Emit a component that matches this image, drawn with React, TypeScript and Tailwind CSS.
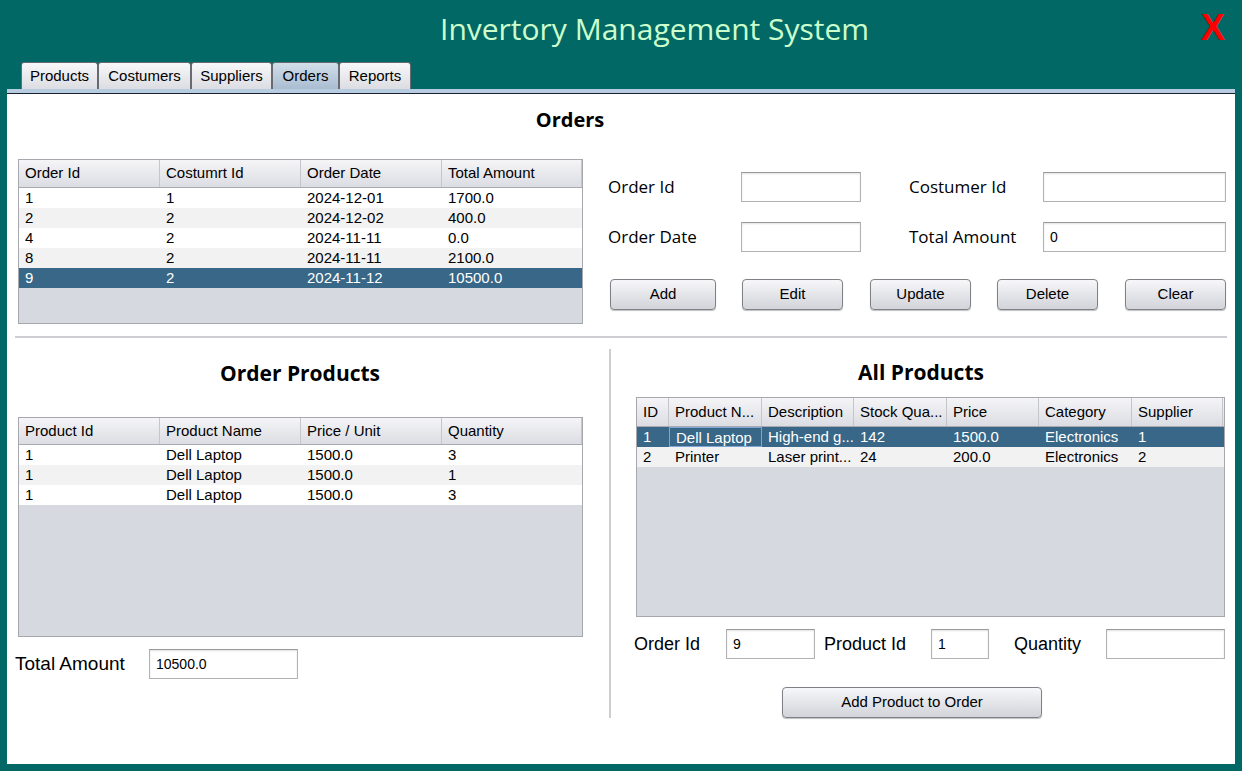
import React from "react";

type Col = { label: string; w: string };

const ordersCols: Col[] = [
  { label: "Order Id", w: "w-[141px]" },
  { label: "Costumrt Id", w: "w-[141px]" },
  { label: "Order Date", w: "w-[141px]" },
  { label: "Total Amount", w: "w-[140px]" },
];

const ordersRows = [
  ["1", "1", "2024-12-01", "1700.0"],
  ["2", "2", "2024-12-02", "400.0"],
  ["4", "2", "2024-11-11", "0.0"],
  ["8", "2", "2024-11-11", "2100.0"],
  ["9", "2", "2024-11-12", "10500.0"],
];

const orderProductCols: Col[] = [
  { label: "Product Id", w: "w-[141px]" },
  { label: "Product Name", w: "w-[141px]" },
  { label: "Price / Unit", w: "w-[141px]" },
  { label: "Quantity", w: "w-[140px]" },
];

const orderProductRows = [
  ["1", "Dell Laptop", "1500.0", "3"],
  ["1", "Dell Laptop", "1500.0", "1"],
  ["1", "Dell Laptop", "1500.0", "3"],
];

const allProductCols: Col[] = [
  { label: "ID", w: "w-[32px]" },
  { label: "Product N...", w: "w-[93px]" },
  { label: "Description", w: "w-[92px]" },
  { label: "Stock Qua...", w: "w-[93px]" },
  { label: "Price", w: "w-[92px]" },
  { label: "Category", w: "w-[93px]" },
  { label: "Supplier", w: "w-[91px]" },
];

const allProductRows = [
  ["1", "Dell Laptop", "High-end g...", "142", "1500.0", "Electronics", "1"],
  ["2", "Printer", "Laser print...", "24", "200.0", "Electronics", "2"],
];

const arial = "font-['Liberation_Sans',Arial,sans-serif]";
const segoe = "font-['Open_Sans','Noto_Sans',sans-serif]";

function Table({
  cols,
  rows,
  sel,
  focusCol,
  className,
  headH,
}: {
  cols: Col[];
  rows: string[][];
  sel?: number;
  focusCol?: number;
  className: string;
  headH: string;
}) {
  return (
    <div className={`border border-[#a6a8ae] bg-[#d6d9e0] overflow-hidden ${arial} text-[15px] text-black ${className}`}>
      <div className={`flex ${headH} bg-linear-to-b from-[#f5f5f7] to-[#dcdde3] border-b border-[#a9abb2]`}>
        {cols.map((c) => (
          <div
            key={c.label}
            className={`${c.w} shrink-0 flex items-center pl-[6px] border-r border-[#c4c6cc] whitespace-nowrap overflow-hidden`}
          >
            {c.label}
          </div>
        ))}
      </div>
      {rows.map((r, i) => {
        const selected = i === sel;
        const bg = selected ? "bg-[#386787] text-white" : i % 2 === 0 ? "bg-white" : "bg-[#f2f2f2]";
        return (
          <div key={i} className={`flex h-[20px] ${bg}`}>
            {r.map((v, j) => (
              <div
                key={j}
                className={`${cols[j].w} shrink-0 pl-[6px] leading-[20px] whitespace-nowrap overflow-hidden ${
                  selected && focusCol === j ? "border border-[#7fa6d2] pl-[5px] leading-[18px]" : ""
                }`}
              >
                {v}
              </div>
            ))}
          </div>
        );
      })}
    </div>
  );
}

function Field({ value, className }: { value?: string; className: string }) {
  return (
    <div
      className={`h-[30px] bg-white border border-[#b2b2b2] border-t-[#9a9a9a] shadow-[inset_0_1px_2px_rgba(0,0,0,0.12)] flex items-center px-[6px] ${arial} text-[14px] text-black ${className}`}
    >
      {value}
    </div>
  );
}

function Button({ label, className }: { label: string; className: string }) {
  return (
    <button
      className={`rounded-[4px] border border-[#7f8187] bg-linear-to-b from-[#f7f7f9] to-[#d2d4da] shadow-[0_1px_1px_rgba(0,0,0,0.25)] ${arial} text-[15px] text-black ${className}`}
    >
      {label}
    </button>
  );
}

const tabs = [
  { label: "Products", w: "w-[77px]" },
  { label: "Costumers", w: "w-[93px]" },
  { label: "Suppliers", w: "w-[81px]" },
  { label: "Orders", w: "w-[67px]" },
  { label: "Reports", w: "w-[72px]" },
];

export default function App() {
  return (
    <div className="w-[1242px] h-[771px] bg-[#016865] flex flex-col overflow-hidden">
      {/* Title bar */}
      <div className="h-[62px] flex items-center shrink-0">
        <h1 className={`ml-[440px] -mt-[6px] ${segoe} text-[30px] text-[#ccffcc]`}>Invertory Management System</h1>
        <span className={`ml-auto mr-[17px] -mt-[6px] ${arial} font-bold text-[36px] leading-none text-[#ff0000]`}>X</span>
      </div>

      {/* Tabs */}
      <div className="h-[27px] flex items-stretch pl-[21px] shrink-0">
        {tabs.map((t) => (
          <div
            key={t.label}
            className={`${t.w} flex items-center justify-center rounded-t-[3px] border border-b-0 border-[#676a70] ${arial} text-[15px] text-black ${
              t.label === "Orders"
                ? "bg-linear-to-b from-[#d3dee9] to-[#a9bdd1]"
                : "bg-linear-to-b from-[#f8f8fa] to-[#dcdde2]"
            }`}
          >
            {t.label}
          </div>
        ))}
      </div>

      <div className="mx-[7px] h-[4px] bg-[#b8cce1] shrink-0" />
      <div className="mx-[7px] h-[1px] bg-[#1b2030] shrink-0" />

      {/* Panel */}
      <div className="mx-[7px] h-[670px] bg-white flex flex-col shrink-0">
        {/* Orders section */}
        <div className="pt-[12px]">
          <h2 className={`w-[1126px] text-center ${segoe} font-bold text-[20px] leading-[28px] text-black`}>Orders</h2>
          <div className="flex mt-[25px]">
            <Table
              cols={ordersCols}
              rows={ordersRows}
              sel={4}
              headH="h-[28px]"
              className="ml-[11px] w-[565px] h-[165px]"
            />
            <div className={`ml-[25px] mt-[13px] ${segoe} text-[17px] text-black`}>
              <div className="flex items-center h-[30px]">
                <span className="w-[133px]">Order Id</span>
                <Field className="w-[120px]" />
                <span className="ml-[48px] w-[134px]">Costumer Id</span>
                <Field className="w-[183px]" />
              </div>
              <div className="flex items-center h-[30px] mt-[20px]">
                <span className="w-[133px]">Order Date</span>
                <Field className="w-[120px]" />
                <span className="ml-[48px] w-[134px]">Total Amount</span>
                <Field value="0" className="w-[183px]" />
              </div>
              <div className="flex mt-[27px] ml-[2px]">
                <Button label="Add" className="w-[106px] h-[31px]" />
                <Button label="Edit" className="ml-[26px] w-[101px] h-[31px]" />
                <Button label="Update" className="ml-[27px] w-[101px] h-[31px]" />
                <Button label="Delete" className="ml-[26px] w-[101px] h-[31px]" />
                <Button label="Clear" className="ml-[27px] w-[101px] h-[31px]" />
              </div>
            </div>
          </div>
        </div>

        <div className="ml-[8px] w-[1212px] h-[2px] bg-[#cdcdd2] mt-[12px]" />

        {/* Lower section */}
        <div className="flex items-start">
          <div className="w-[602px] shrink-0">
            <h2 className={`w-[586px] mt-[21px] text-center ${segoe} font-bold text-[21px] leading-[28px] text-black`}>
              Order Products
            </h2>
            <Table
              cols={orderProductCols}
              rows={orderProductRows}
              headH="h-[27px]"
              className="mt-[30px] ml-[11px] w-[565px] h-[220px]"
            />
            <div className="flex items-center mt-[12px] ml-[8px]">
              <span className={`w-[134px] ${arial} text-[19px] text-black`}>Total Amount</span>
              <Field value="10500.0" className="w-[149px]" />
            </div>
          </div>

          <div className="w-[2px] h-[369px] mt-[11px] bg-[#cdcdd2] shrink-0" />

          <div className="w-[624px] shrink-0">
            <h2 className={`w-[620px] mt-[20px] text-center ${segoe} font-bold text-[21px] leading-[28px] text-black`}>
              All Products
            </h2>
            <Table
              cols={allProductCols}
              rows={allProductRows}
              sel={0}
              focusCol={1}
              headH="h-[29px]"
              className="mt-[11px] ml-[25px] w-[589px] h-[220px]"
            />
            <div className={`flex items-center mt-[12px] ml-[23px] ${arial} text-[18px] text-black`}>
              <span className="w-[92px]">Order Id</span>
              <Field value="9" className="w-[89px]" />
              <span className="ml-[9px] w-[107px]">Product Id</span>
              <Field value="1" className="w-[58px]" />
              <span className="ml-[25px] w-[92px]">Quantity</span>
              <Field className="w-[119px]" />
            </div>
            <Button label="Add Product to Order" className="mt-[28px] ml-[171px] w-[260px] h-[31px]" />
          </div>
        </div>
      </div>
    </div>
  );
}
